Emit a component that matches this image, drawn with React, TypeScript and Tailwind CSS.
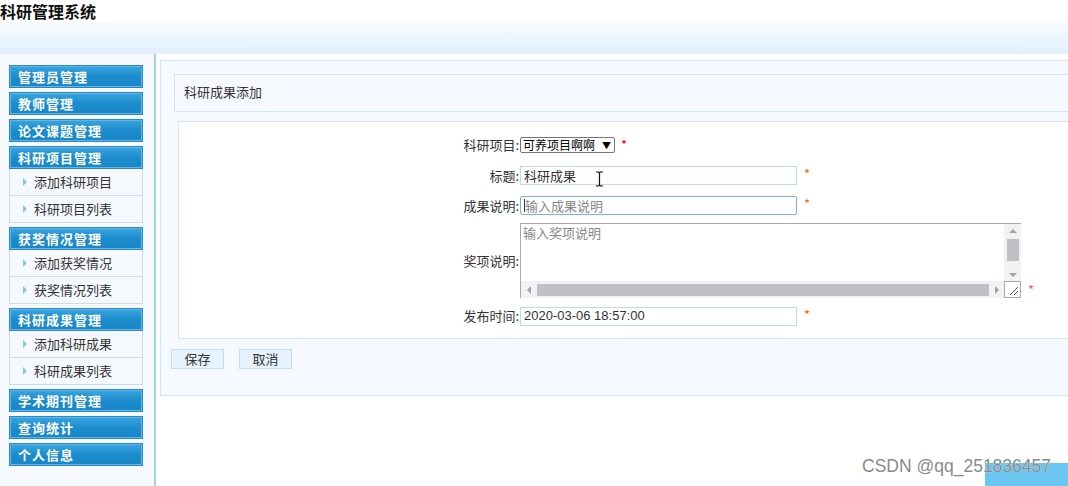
const menuHead =
  "h-[23px] border border-[#2f86c0] bg-gradient-to-b from-[#3aa6e0] via-[#1b8ccc] to-[#1a86c6] shadow-[inset_0_0_0_1px_#5cb8e8] pl-[8px] flex items-center text-[13px] font-bold text-white tracking-[1px]";

const MenuHead = ({ label }: { label: string }) => <div className={menuHead}>{label}</div>;

const SubItem = ({ label }: { label: string }) => (
  <div className="h-[27px] border-x border-b border-[#c9dcea] bg-[#f5f9fd] flex items-center pl-[13px] gap-[7px] text-[13px] text-[#333]">
    <span className="w-0 h-0 border-y-[4px] border-y-transparent border-l-[4px] border-l-[#8cc3e6]" />
    <span>{label}</span>
  </div>
);

const Group = ({ head, items }: { head: string; items?: string[] }) => (
  <div className="flex flex-col">
    <MenuHead label={head} />
    {items?.map((i) => <SubItem key={i} label={i} />)}
  </div>
);

const Row = ({ label, h, mt, children }: { label: string; h: string; mt: string; children: React.ReactNode }) => (
  <div className={`flex items-center ${h} ${mt}`}>
    <div className="w-[341px] text-right text-[13px] text-[#333] pr-[1px] whitespace-nowrap">{label}</div>
    {children}
  </div>
);

const Star = ({ c, cls }: { c: string; cls?: string }) => (
  <span className={`text-[13px] leading-none ${c} ${cls ?? ""}`}>*</span>
);

export default function App() {
  return (
    <div
      className="relative w-[1068px] h-[486px] overflow-hidden bg-white"
      style={{ fontFamily: '"Noto Sans CJK SC", "Liberation Sans", sans-serif' }}
    >
      <div className="h-[22px] text-[16px] font-bold text-[#111] leading-[22px]">科研管理系统</div>
      <div className="h-[32px] bg-gradient-to-b from-[#f7fbff] to-[#e1f0fd]" />
      <div className="flex h-[432px]">
        <div className="w-[156px] shrink-0 bg-[#f6f9fe] border-r-2 border-[#a3cfef] pl-[9px] pr-[11px] pt-[11px] flex flex-col gap-[4px]">
          <Group head="管理员管理" />
          <Group head="教师管理" />
          <Group head="论文课题管理" />
          <Group head="科研项目管理" items={["添加科研项目", "科研项目列表"]} />
          <Group head="获奖情况管理" items={["添加获奖情况", "获奖情况列表"]} />
          <Group head="科研成果管理" items={["添加科研成果", "科研成果列表"]} />
          <Group head="学术期刊管理" />
          <Group head="查询统计" />
          <Group head="个人信息" />
        </div>
        <div className="flex-1 pl-[4px] pt-[6px]">
          <div className="w-[1000px] h-[336px] border border-[#cfe5f8] bg-[#f6f9ff] pt-[13px] pl-[13px]">
            <div className="h-[38px] border border-[#cfe5f8] bg-[#f6f9ff] flex items-center pl-[9px] pb-[2px] text-[13px] text-[#333]">
              科研成果添加
            </div>
            <div className="ml-[4px] mt-[9px] h-[218px] border border-[#cfe5f8] bg-white pt-[15px]">
              <Row label="科研项目:" h="h-[16px]" mt="mt-0">
                <div className="w-[95px] h-[16px] border border-[#767676] rounded-[2px] flex items-center justify-between pl-[2px] pr-[3px] text-[12px] text-black leading-none whitespace-nowrap">
                  <span>可养项目啊啊</span>
                  <span className="text-[9px]">▼</span>
                </div>
                <Star c="text-[#ff0000]" cls="ml-[6px] -mt-[2px]" />
              </Row>
              <Row label="标题:" h="h-[19px]" mt="mt-[13px]">
                <div className="w-[277px] h-[19px] border border-[#bcdcf5] flex items-center pl-[3px] text-[13px] text-[#333]">
                  科研成果
                </div>
                <Star c="text-[#ff6a00]" cls="ml-[7px] -mt-[4px]" />
              </Row>
              <Row label="成果说明:" h="h-[19px]" mt="mt-[11px]">
                <div className="w-[277px] h-[19px] border-[1.5px] border-[#7ab1ea] rounded-[2px] flex items-center pl-[3px] text-[13px] text-[#888]">
                  <span className="w-px h-[13px] bg-[#333]" />
                  输入成果说明
                </div>
                <Star c="text-[#ff6a00]" cls="ml-[7px] -mt-[4px]" />
              </Row>
              <Row label="奖项说明:" h="h-[75px]" mt="mt-[8px]">
                <div className="w-[501px] h-[75px] flex flex-col border-t border-l border-[#a9a9a9]">
                  <div className="flex flex-1">
                    <div className="flex-1 pl-[2px] text-[13px] text-[#888] leading-[18px]">输入奖项说明</div>
                    <div className="w-[17px] bg-[#f3f1f4] flex flex-col items-center">
                      <span className="mt-[5px] w-0 h-0 border-x-[4px] border-x-transparent border-b-[4px] border-b-[#a3a3a3]" />
                      <span className="mt-[6px] w-[12px] h-[22px] bg-[#c1c0c4]" />
                      <span className="mt-auto mb-[4px] w-0 h-0 border-x-[4px] border-x-transparent border-t-[4px] border-t-[#a3a3a3]" />
                    </div>
                  </div>
                  <div className="flex h-[17px]">
                    <div className="flex-1 bg-[#f3f1f4] flex items-center">
                      <span className="ml-[6px] w-0 h-0 border-y-[4px] border-y-transparent border-r-[4px] border-r-[#a3a3a3]" />
                      <span className="ml-[6px] flex-1 h-[12px] bg-[#c1c0c4]" />
                      <span className="ml-[6px] mr-[5px] w-0 h-0 border-y-[4px] border-y-transparent border-l-[4px] border-l-[#a3a3a3]" />
                    </div>
                    <div className="w-[17px] border border-[#a9a9a9] bg-white relative">
                      <svg width="15" height="15" viewBox="0 0 15 15" className="absolute right-0 bottom-0">
                        <path d="M5 13 L13 5 M9 13 L13 9" stroke="#555" strokeWidth="1" />
                      </svg>
                    </div>
                  </div>
                </div>
                <Star c="text-[#ff4f8a]" cls="ml-[7px] mt-[58px]" />
              </Row>
              <Row label="发布时间:" h="h-[18px]" mt="mt-[9px]">
                <div
                  className="w-[277px] h-[19px] border border-[#bcdcf5] flex items-center pl-[3px] text-[13px] text-[#333]"
                  style={{ fontFamily: '"Liberation Sans", sans-serif' }}
                >
                  2020-03-06 18:57:00
                </div>
                <Star c="text-[#ff6a00]" cls="ml-[7px] -mt-[4px]" />
              </Row>
            </div>
            <div className="flex gap-[15px] mt-[10px] -ml-[3px]">
              <div className="w-[53px] h-[20px] border border-[#c5def5] bg-[#e6f2fd] flex items-center justify-center text-[13px] text-[#333]">保存</div>
              <div className="w-[53px] h-[20px] border border-[#c5def5] bg-[#e6f2fd] flex items-center justify-center text-[13px] text-[#333]">取消</div>
            </div>
          </div>
        </div>
      </div>
      <svg width="9" height="16" viewBox="0 0 9 16" className="absolute left-[595px] top-[171px]">
        <path d="M1 1 H3.5 L4.5 2 L5.5 1 H8 M4.5 2 V14 M1 15 H3.5 L4.5 14 L5.5 15 H8" stroke="#111" strokeWidth="1.2" fill="none" />
      </svg>
      <div className="absolute left-[985px] top-[463px] w-[83px] h-[23px] bg-[#6ac5ef]" />
      <div
        className="absolute left-[862px] top-[456px] text-[17.5px] text-[#8a8a8a] leading-[20px] whitespace-nowrap"
        style={{ fontFamily: '"Liberation Sans", sans-serif', textShadow: "0 0 1px #fff" }}
      >
        CSDN @qq_251836457
      </div>
    </div>
  );
}
